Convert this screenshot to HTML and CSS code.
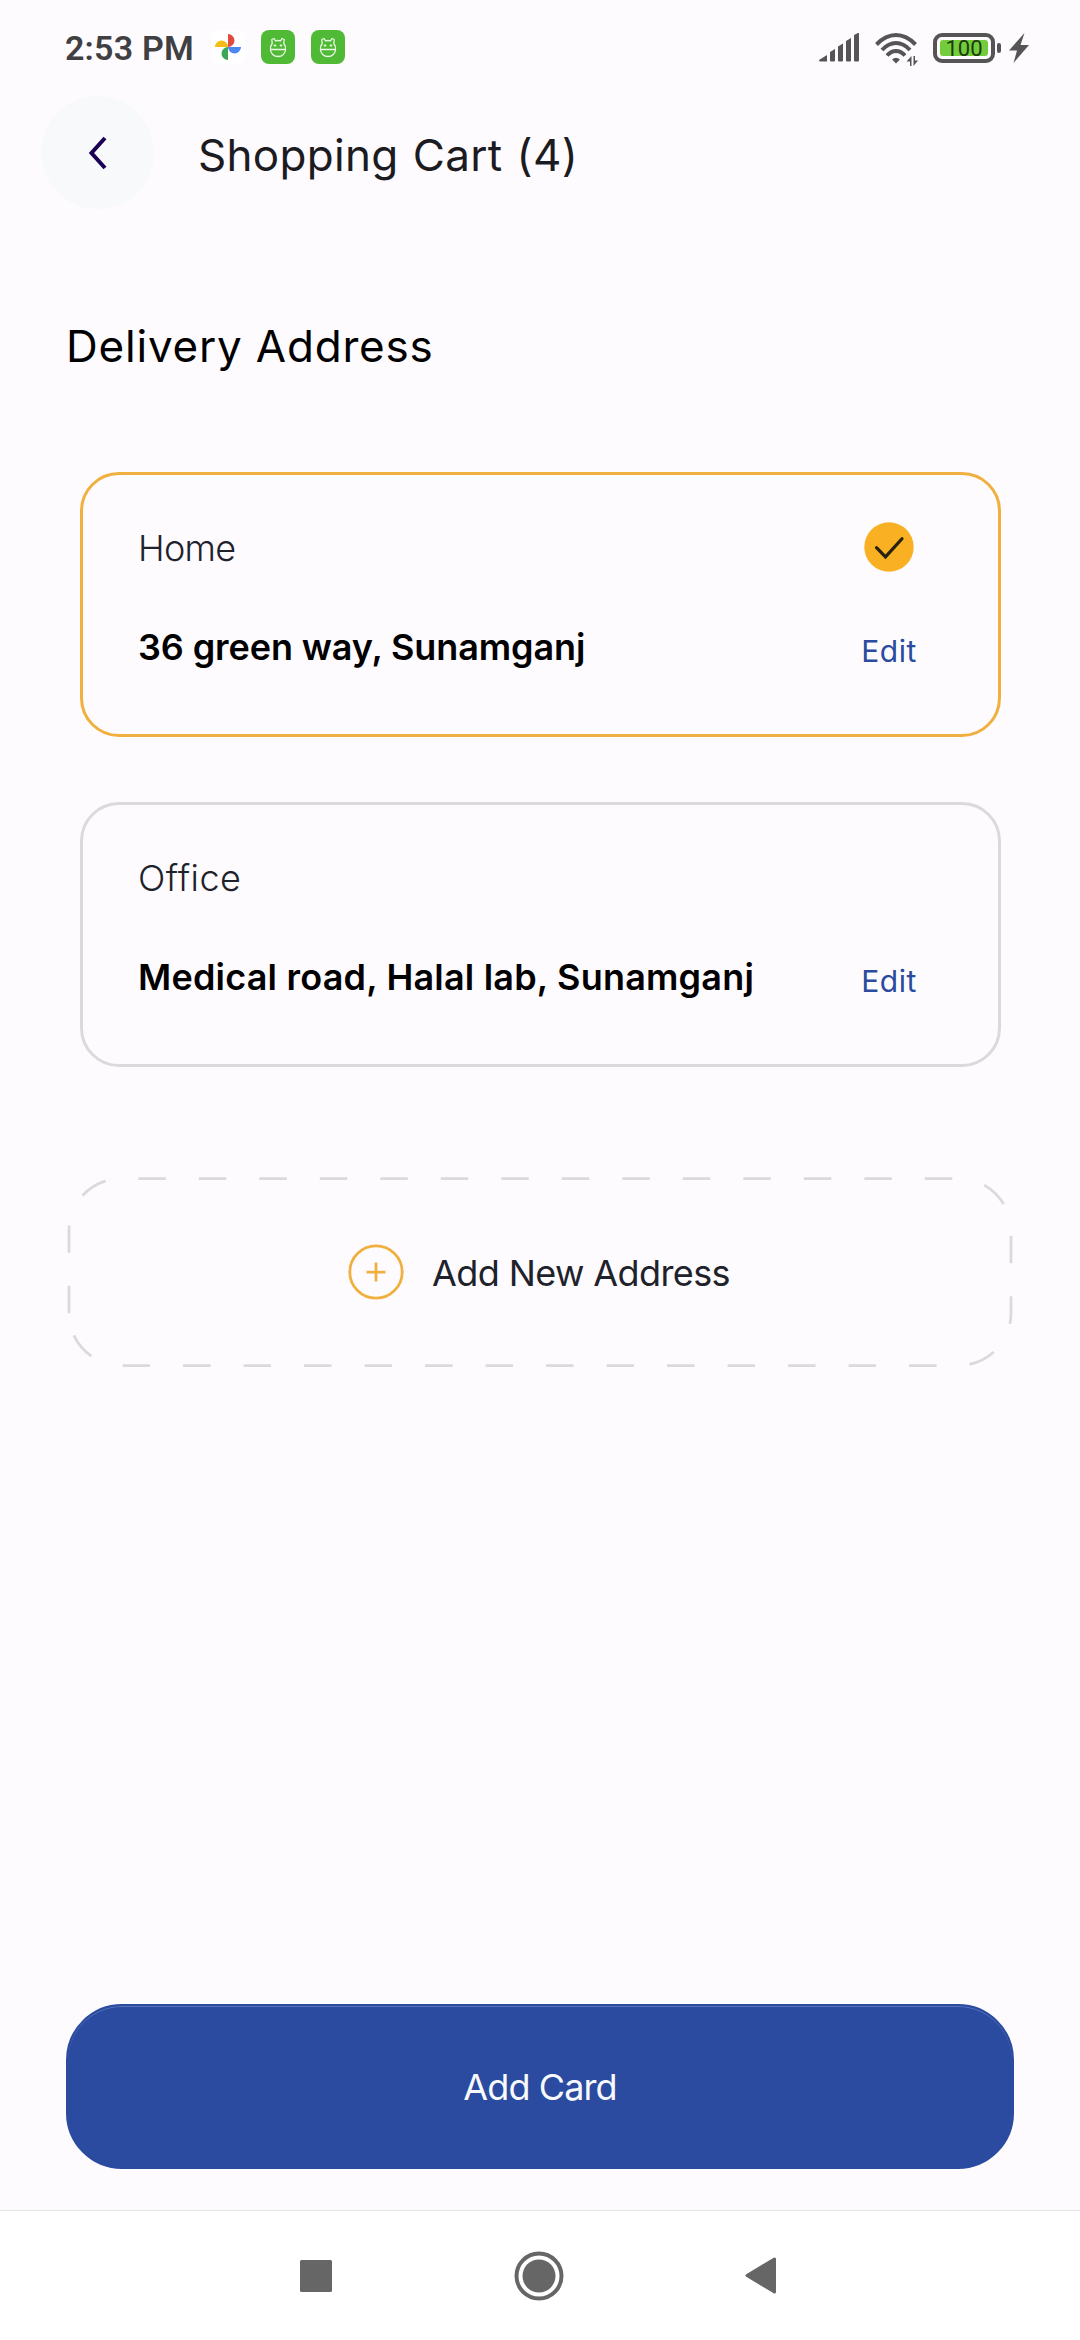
FILE: index.html
```html
<!DOCTYPE html>
<html lang="en">
<head>
<meta charset="utf-8">
<title>Shopping Cart</title>
<link rel="stylesheet" href="styles.css">
</head>
<body>
<div class="screen">
  <div class="status">
    <span class="clock">2:53 PM</span>
    <div class="notifications">
      <svg width="34" height="34" viewBox="0 0 34 34">
        <rect width="34" height="34" rx="7" fill="#fff"/>
        <path d="M17 17V4a6.500 6.500 0 0 1 0 13z" fill="#e04a3f"/>
        <path d="M17 17h13a6.500 6.500 0 0 1-13 0z" fill="#4a87ee"/>
        <path d="M17 17v13a6.500 6.500 0 0 1 0-13z" fill="#3aa757"/>
        <path d="M17 17H4a6.500 6.500 0 0 1 13 0z" fill="#f6bd16"/>
      </svg>
      <svg width="34" height="34" viewBox="0 0 34 34">
        <rect width="34" height="34" rx="8" fill="#50ba36"/>
        <g fill="none" stroke="#e9f8e4" stroke-width="1.300" stroke-linejoin="round"><path d="M9.500 19.500a7.500 7 0 0 0 15 0zM9.500 19.500q-.3-3.500 1.700-6l-.4-4 2.200-1 1.500 2.300q2.500-.6 5 0L21 8.500l2.200 1-.4 4q2 2.500 1.700 6"/><path d="M12.700 15.500h2.600M18.700 15.500h2.600M14 14.200v2.600M20 14.200v2.600" stroke-width="1"/></g>
      </svg>
      <svg width="34" height="34" viewBox="0 0 34 34">
        <rect width="34" height="34" rx="8" fill="#50ba36"/>
        <g fill="none" stroke="#e9f8e4" stroke-width="1.300" stroke-linejoin="round"><path d="M9.500 19.500a7.500 7 0 0 0 15 0zM9.500 19.500q-.3-3.500 1.700-6l-.4-4 2.200-1 1.500 2.300q2.500-.6 5 0L21 8.500l2.200 1-.4 4q2 2.500 1.700 6"/><path d="M12.700 15.500h2.600M18.700 15.500h2.600M14 14.200v2.600M20 14.200v2.600" stroke-width="1"/></g>
      </svg>
    </div>
    <div class="indicators">
      <svg class="signal" width="41" height="30" viewBox="0 0 41 30" fill="#555">
        <path d="M0 27l8-5v6.500H1.500Q0 28.500 0 27zM11 19l5-3v11.500q0 1-1 1h-3q-1 0-1-1zM19 13.500l5-3v17q0 1-1 1h-3q-1 0-1-1zM27 8l5-3v22.500q0 1-1 1h-3q-1 0-1-1zM35 2l4-2h1v27.500q0 1-1 1h-3q-1 0-1-1z"/>
      </svg>
      <svg class="wifi" width="43" height="33" viewBox="0 0 43 33">
        <g fill="none" stroke="#555" stroke-width="4"><path d="M1.500 11.500Q10.500 2 21 2t19.500 9.500"/><path d="M7 17q6.500-7 14-7t14 7"/><path d="M12 22.500q4-4.500 9-4.500t9 4.500"/></g>
        <path d="M17 26.500q4-3.500 8 0L21 30.500zM36.500 23v10H35v-4.500h-3.500zM38.500 33V23H40v4.500h3z" fill="#555"/>
      </svg>
      <div class="battery"><span class="level">100</span></div>
      <span class="terminal"></span>
      <svg class="bolt" width="20" height="30" viewBox="0 0 20 30"><path d="M15.500 0L0 17.500h8L4.500 30 20 12h-8.500z" fill="#555"/></svg>
    </div>
  </div>

  <header class="header">
    <div class="back">
      <svg width="20" height="34" viewBox="0 0 20 34"><path d="M17 2L3.500 17 17 32" fill="none" stroke="#1b0053" stroke-width="4"/></svg>
    </div>
    <h1 class="title">Shopping Cart (4)</h1>
  </header>

  <main class="main">
    <h2 class="heading">Delivery Address</h2>
    <section class="addresses">
      <article class="card selected">
        <div class="label home-label">Home</div>
        <svg class="check" width="50" height="50" viewBox="0 0 50 50"><circle cx="25" cy="25" r="24.700" fill="#f9b023"/><path d="M12.500 25.700l9 9.200 16.500-18.200" fill="none" stroke="#26220f" stroke-width="3.200" stroke-linecap="round"/></svg>
        <div class="address home">36 green way, Sunamganj</div>
        <div class="edit">Edit</div>
      </article>
      <article class="card">
        <div class="label office-label">Office</div>
        <div></div>
        <div class="address office">Medical road, Halal lab, Sunamganj</div>
        <div class="edit">Edit</div>
      </article>
    </section>
    <div class="add-new">
      <svg class="dashes" width="946" height="190" viewBox="0 0 946 190"><path d="M2 136.250V53.750A52.250 52.250 0 0 1 54.250 1.500H891.750A52.250 52.250 0 0 1 944 53.750V136.250A52.250 52.250 0 0 1 891.750 188.500H54.250A52.250 52.250 0 0 1 2 136.250" fill="none" stroke="#dadada" stroke-width="2.750" stroke-dasharray="27.500 33"/></svg>
      <svg width="56" height="56" viewBox="0 0 56 56"><g fill="none" stroke="#f0b040" stroke-width="2.750"><circle cx="28" cy="28" r="26.200"/><path d="M18.500 28h19M28 18.500v19"/></g></svg>
      <span class="add-text">Add New Address</span>
    </div>
    <div class="button"><span class="button-text">Add Card</span></div>
  </main>

  <nav class="nav">
    <svg width="32" height="32" viewBox="0 0 32 32"><rect width="32" height="32" rx="1.500" fill="#666"/></svg>
    <svg width="50" height="50" viewBox="0 0 50 50"><circle cx="25" cy="25" r="22.500" fill="none" stroke="#666" stroke-width="4"/><circle cx="25" cy="25" r="16.500" fill="#666"/></svg>
    <svg width="32" height="37" viewBox="0 0 32 37"><path d="M2 18.500L29.500 2v33z" fill="#666" stroke="#666" stroke-width="3" stroke-linejoin="round"/></svg>
  </nav>
</div>
</body>
</html>
```
FILE: styles.css
```css
* {
  box-sizing: border-box;
}

body {
  margin: 0;
  background: #fefbff;
  font-family: Inter, "Noto Sans", sans-serif;
}

svg {
  display: block;
  flex: none;
}

.screen {
  width: 1080px;
  height: 2340px;
  display: flex;
  flex-direction: column;
  overflow: hidden;
}

.status {
  height: 96px;
  padding: 30px 51px 0 65px;
  display: flex;
  align-items: flex-start;
}

.clock {
  width: 146px;
  font: 600 34px/36px Roboto, sans-serif;
  color: #404042;
  letter-spacing: 0.2px;
  white-space: nowrap;
}

.notifications {
  display: flex;
  gap: 16px;
}

.indicators {
  margin-left: auto;
  display: flex;
  padding-top: 3px;
}

.wifi {
  margin-left: 15px;
}

.battery {
  width: 62px;
  height: 30px;
  margin-left: 15px;
  padding: 3px;
  border: 4px solid #555;
  border-radius: 9px;
}

.level {
  display: block;
  width: 48px;
  height: 16px;
  border-radius: 3px;
  background: #73cc3c;
  color: #1d3b10;
  font: 400 22px/18px Roboto, sans-serif;
  text-align: center;
}

.terminal {
  width: 4px;
  height: 10px;
  margin: 10px 0 0 2px;
  border-radius: 2px;
  background: #555;
}

.bolt {
  margin-left: 8px;
}

.header {
  height: 113px;
  padding-left: 41px;
  display: flex;
  align-items: center;
}

.back {
  width: 113px;
  height: 113px;
  border-radius: 50%;
  background: #f8f9fb;
  display: grid;
  place-items: center;
}

.title {
  margin: 0 0 0 44px;
  padding-top: 5px;
  font-size: 44px;
  line-height: 56px;
  font-weight: 400;
  color: #1c1b1f;
  letter-spacing: 0.3px;
  word-spacing: 1.5px;
}

.main {
  flex: 1;
  display: flex;
  flex-direction: column;
  padding: 107px 66px 41px;
}

.heading {
  margin: 0;
  font-size: 44px;
  line-height: 60px;
  font-weight: 400;
  color: #000;
  letter-spacing: 0.8px;
}

.addresses {
  margin: 96px 13px 0 14px;
  display: flex;
  flex-direction: column;
  gap: 65px;
}

.card {
  height: 265px;
  padding: 47px 81px 0 55px;
  border: 3px solid #dadada;
  border-radius: 39px;
  display: grid;
  grid-template-columns: 1fr 56px;
  grid-template-rows: 50px 50px;
  row-gap: 50px;
  justify-items: start;
}

.selected {
  border-color: #f0b040;
}

.label {
  padding-top: 1px;
  font-size: 36px;
  line-height: 50px;
  font-weight: 300;
  color: #1e222b;
}

.home-label {
  letter-spacing: -0.7px;
}

.office-label {
  letter-spacing: 0.5px;
}

.check {
  justify-self: center;
}

.address {
  font-size: 36px;
  line-height: 50px;
  font-weight: 600;
  color: #000;
  white-space: nowrap;
}

.home {
  letter-spacing: -0.1px;
}

.office {
  letter-spacing: 0.2px;
}

.edit {
  padding-top: 4px;
  justify-self: center;
  font-size: 30px;
  line-height: 50px;
  color: #2a4ba0;
  letter-spacing: 0.5px;
}

.add-new {
  position: relative;
  height: 190px;
  margin: 110px 0 0 1px;
  padding-left: 281px;
  display: flex;
  align-items: center;
}

.dashes {
  position: absolute;
  left: 0;
  top: 0;
}

.add-text {
  margin-left: 28px;
  padding-top: 1px;
  font-size: 36px;
  line-height: 50px;
  color: #1e222b;
  letter-spacing: -0.6px;
}

.button {
  height: 165px;
  margin-top: auto;
  border: 2px solid #2a4ba0;
  border-radius: 56px;
  background: #2a4ba0;
  box-shadow: inset 0 1px 0 #5874b8;
  display: flex;
  align-items: center;
  justify-content: center;
}

.button-text {
  font-size: 36px;
  line-height: 50px;
  color: #f8f9fb;
  letter-spacing: -0.9px;
}

.nav {
  height: 130px;
  border-top: 1px solid #e6e3e7;
  background: #fff;
  padding: 0 303px 0 300px;
  display: flex;
  align-items: center;
  justify-content: space-between;
}
```
